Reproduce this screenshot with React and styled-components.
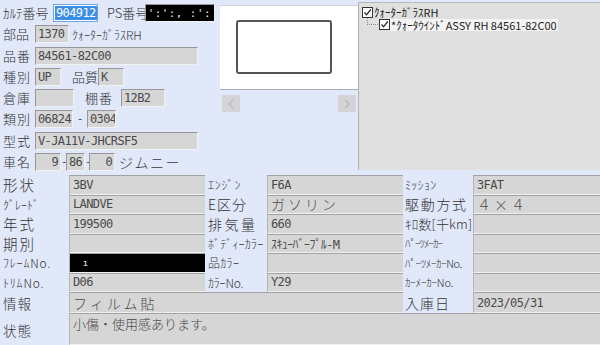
import React from "react";
import styled, { createGlobalStyle } from "styled-components";

const GlobalStyle = createGlobalStyle`
  html, body {
    margin: 0;
    padding: 0;
    background: #e0e8fa;
  }
  body {
    font-family: "Noto Sans CJK JP", sans-serif;
    font-weight: 300;
    color: #333;
  }
`;

const Screen = styled.div`
  width: 600px;
  height: 345px;
  overflow: hidden;
  display: flex;
  flex-direction: column;
`;

const Top = styled.div`
  display: flex;
  height: 175px;
  flex-shrink: 0;
`;

const Form = styled.div`
  width: 220px;
  box-sizing: border-box;
  padding: 4px 0 0 3px;
  display: flex;
  flex-direction: column;
  gap: 3.3px;
`;

const Row = styled.div`
  display: flex;
  align-items: center;
  height: 18px;
`;

const Label = styled.span`
  font-size: 13px;
  line-height: 18px;
  white-space: nowrap;
  width: ${({ w }) => (w ? `${w}px` : "auto")};
  margin-left: ${({ ml }) => ml || 0}px;
  letter-spacing: ${({ ls }) => ls || 0}px;
  flex-shrink: 0;
`;

const Dash = styled.span`
  font-family: "DejaVu Sans Mono", monospace;
  font-size: 11px;
  line-height: 18px;
  height: 18px;
  color: #444;
  width: ${({ w }) => w || 14}px;
  text-align: center;
  flex-shrink: 0;
  overflow: visible;
`;

const Field = styled.div`
  width: ${({ w }) => w}px;
  height: 18px;
  box-sizing: border-box;
  flex-shrink: 0;
  background: ${({ dark }) => (dark ? "#000" : "#d6d6d6")};
  border: 1px solid;
  border-color: #979797 #f2f2f2 #f2f2f2 #979797;
  font-family: "DejaVu Sans Mono", "Noto Sans CJK JP", monospace;
  font-weight: 400;
  font-size: 12px;
  letter-spacing: -0.6px;
  line-height: 16px;
  color: ${({ dark }) => (dark ? "#fff" : "#4a4a4a")};
  padding: 0 2px;
  text-align: ${({ right }) => (right ? "right" : "left")};
  white-space: nowrap;
  overflow: hidden;
`;

const FocusField = styled(Field)`
  background: #fff;
  border-color: #6fa3d8;
  padding: 0 1px;
`;

const Selected = styled.span`
  background: #3b8ee8;
  color: #fff;
  padding: 0 1px;
`;

const Kana = styled.span`
  font-size: ${({ size }) => size || 12}px;
  letter-spacing: ${({ ls }) => ls || 0}px;
  margin-left: ${({ ml }) => ml || 0}px;
  white-space: nowrap;
  color: ${({ light }) => (light ? "#fff" : "#3a3a3a")};
`;

const ImageCol = styled.div`
  width: 138px;
  flex-shrink: 0;
  padding-top: 5px;
  box-sizing: border-box;
`;

const ImagePanel = styled.div`
  height: 85px;
  background: #fff;
  border-top: 1px solid #cfd3dc;
  border-bottom: 1px solid #a9adb6;
  box-sizing: border-box;
  padding: 14px 0 0 16px;
`;

const Frame = styled.div`
  width: 96px;
  height: 54px;
  box-sizing: border-box;
  border: 2px solid #555;
  border-radius: 3px;
  background: #fff;
`;

const NavRow = styled.div`
  display: flex;
  justify-content: space-between;
  padding: 5px 2px 0 2px;
`;

const NavButton = styled.div`
  width: 18px;
  height: 17px;
  background: #d4d4d6;
  display: flex;
  align-items: center;
  justify-content: center;
`;

const Tree = styled.div`
  flex: 1;
  margin-top: 2px;
  height: 168px;
  background: #e0e0e0;
  border-left: 1px solid #b0b0b0;
  border-top: 1px solid #b8b8b8;
  box-sizing: border-box;
  padding: 3px 0 0 3px;
`;

const TreeItem = styled.div`
  display: flex;
  align-items: center;
  height: 12.5px;
  margin-left: ${({ indent }) => indent || 0}px;
`;

const Connector = styled.span`
  width: 11px;
  height: 7px;
  margin: -6px 1px 0 0;
  border-left: 1px dotted #8a8a8a;
  border-bottom: 1px dotted #8a8a8a;
  box-sizing: border-box;
`;

const Box = styled.span`
  width: 11px;
  height: 11px;
  box-sizing: border-box;
  border: 1px solid #333;
  background: #fff;
  display: inline-flex;
  flex-shrink: 0;
`;

const TreeText = styled.span`
  font-size: 11px;
  line-height: 12px;
  height: 12px;
  color: #222;
  font-weight: 400;
  white-space: nowrap;
  padding: 0 1px;
  background: ${({ hl }) => (hl ? "#f4f4f4" : "transparent")};
`;

const Grid = styled.div`
  flex: 1;
  display: grid;
  grid-template-columns: 69px 136px 62px 136px 70px 1fr;
  grid-template-rows: repeat(6, 19.5px) 21px 1fr;
`;

const GLabel = styled.div`
  padding-left: ${({ pl }) => (pl === undefined ? 3 : pl)}px;
  font-size: ${({ size }) => size || 14}px;
  letter-spacing: ${({ ls }) => (ls === undefined ? 2 : ls)}px;
  display: flex;
  align-items: ${({ top }) => (top ? "flex-start" : "center")};
  white-space: nowrap;
  overflow: hidden;
  color: #333;
`;

const GField = styled.div`
  grid-column: ${({ span }) => span || "auto"};
  box-sizing: border-box;
  background: ${({ dark }) => (dark ? "#000" : "#d6d6d6")};
  border-top: 1px solid #a2a2a2;
  border-left: 1px solid #b4b4b4;
  border-bottom: 1px solid #f0f0f0;
  padding: 0 3px;
  display: flex;
  align-items: ${({ top }) => (top ? "flex-start" : "center")};
  white-space: nowrap;
  overflow: hidden;
  color: ${({ dark }) => (dark ? "#fff" : "#4a4a4a")};
  font-family: ${({ jp }) =>
    jp ? `"Noto Sans CJK JP", sans-serif` : `"DejaVu Sans Mono", "Noto Sans CJK JP", monospace`};
  font-weight: ${({ jp }) => (jp ? 300 : 400)};
  font-size: ${({ jp, size }) => size || (jp ? 14 : 12)}px;
  letter-spacing: ${({ ls }) => (ls === undefined ? -0.6 : ls)}px;
`;

const Check = () => (
  <Box>
    <svg width="9" height="9" viewBox="0 0 9 9">
      <path d="M1.5 4.5 L3.5 6.8 L7.8 1.5" fill="none" stroke="#222" strokeWidth="1.2" />
    </svg>
  </Box>
);

const Arrow = ({ dir }) => (
  <svg width="8" height="10" viewBox="0 0 8 10">
    <path
      d={dir === "left" ? "M6 1 L2 5 L6 9" : "M2 1 L6 5 L2 9"}
      fill="none"
      stroke="#b9b9bd"
      strokeWidth="1.3"
    />
  </svg>
);

// label specs: [text, size, letterSpacing]
const big = (t) => [t, 14.5, 2];
const small = (t, ls = 0) => [t, 12, ls];

const gridRows = [
  [big("形状"), "3BV", small("ｴﾝｼﾞﾝ", 0.8), "F6A", small("ﾐｯｼｮﾝ", 0.3), "3FAT"],
  [small("ｸﾞﾚｰﾄﾞ"), "LANDVE", ["E区分", 14, 1], { jp: "ガソリン" }, ["駆動方式", 14, 1.7], { jp: "４×４" }],
  [big("年式"), "199500", ["排気量", 14, 2.5], "660", ["ｷﾛ数[千km]", 13, 0.2], ""],
  [big("期別"), "", small("ﾎﾞﾃﾞｨｰｶﾗｰ", 0.2), "ｽｷｭｰﾊﾞｰﾌﾟﾙ-M", ["ﾊﾟｰﾂﾒｰｶｰ", 11, -1], ""],
  [small("ﾌﾚｰﾑNo.", 0.8), { dark: "ı" }, small("品ｶﾗｰ", 0.3), "", ["ﾊﾟｰﾂﾒｰｶｰNo.", 11, -0.4], ""],
  [small("ﾄﾘﾑNo.", 0.8), "D06", small("ｶﾗｰNo.", -0.2), "Y29", ["ｶｰﾒｰｶｰNo.", 11, -0.2], ""],
];

const Value = ({ v, span }) => {
  if (v && v.jp) {
    return (
      <GField jp ls={3} span={span}>
        {v.jp}
      </GField>
    );
  }
  if (v && v.dark) {
    return (
      <GField dark span={span} size={9}>
        &nbsp;&nbsp;{v.dark}
      </GField>
    );
  }
  return <GField span={span}>{v}</GField>;
};

const Cell = ({ spec, pl }) => (
  <GLabel size={spec[1]} ls={spec[2]} pl={pl}>
    {spec[0]}
  </GLabel>
);

export default function App() {
  return (
    <>
      <GlobalStyle />
      <Screen>
        <Top>
          <Form>
            <Row>
              <Label w={50}>ｶﾙﾃ番号</Label>
              <FocusField w={45}>
                <Selected>904912</Selected>
              </FocusField>
              <Label ml={9} w={38}>PS番号</Label>
              <Field w={70} dark>
                <Kana size={10} ls={1} light>
                  ':':, :':
                </Kana>
              </Field>
            </Row>
            <Row>
              <Label w={32}>部品</Label>
              <Field w={34}>1370</Field>
              <Kana ml={3}>ｸｫｰﾀｰｶﾞﾗｽRH</Kana>
            </Row>
            <Row>
              <Label w={32} ls={1}>品番</Label>
              <Field w={163}>84561-82C00</Field>
            </Row>
            <Row>
              <Label w={32} ls={1}>種別</Label>
              <Field w={26}>UP</Field>
              <Label ml={11} w={26}>品質</Label>
              <Field w={26}>K</Field>
            </Row>
            <Row>
              <Label w={32} ls={1}>倉庫</Label>
              <Field w={39} />
              <Label ml={11} w={36} ls={1}>棚番</Label>
              <Field w={44}>12B2</Field>
            </Row>
            <Row>
              <Label w={32} ls={1}>類別</Label>
              <Field w={38}>06824</Field>
              <Dash>-</Dash>
              <Field w={29}>0304</Field>
            </Row>
            <Row>
              <Label w={32} ls={1}>型式</Label>
              <Field w={163}>V-JA11V-JHCRSF5</Field>
            </Row>
            <Row>
              <Label w={32} ls={1}>車名</Label>
              <Field w={26} right>9</Field>
              <Dash w={5}>-</Dash>
              <Field w={19} right>86</Field>
              <Dash w={4}>-</Dash>
              <Field w={26} right>0</Field>
              <Kana size={14} ls={1.5} ml={4}>ジムニー</Kana>
            </Row>
          </Form>

          <ImageCol>
            <ImagePanel>
              <Frame />
            </ImagePanel>
            <NavRow>
              <NavButton>
                <Arrow dir="left" />
              </NavButton>
              <NavButton>
                <Arrow dir="right" />
              </NavButton>
            </NavRow>
          </ImageCol>

          <Tree>
            <TreeItem>
              <Check />
              <TreeText>ｸｫｰﾀｰｶﾞﾗｽRH</TreeText>
            </TreeItem>
            <TreeItem indent={5}>
              <Connector />
              <Check />
              <TreeText hl>*ｸｫｰﾀｳｲﾝﾄﾞASSY RH 84561-82C00</TreeText>
            </TreeItem>
          </Tree>
        </Top>

        <Grid>
          {gridRows.map((r) => (
            <React.Fragment key={r[0][0]}>
              <Cell spec={r[0]} />
              <Value v={r[1]} />
              <Cell spec={r[2]} />
              <Value v={r[3]} />
              <Cell spec={r[4]} pl={2} />
              <Value v={r[5]} />
            </React.Fragment>
          ))}
          <GLabel size={13.5} ls={1}>情報</GLabel>
          <GField jp ls={3} span="2 / 5">フィルム貼</GField>
          <GLabel pl={2} size={14} ls={1}>入庫日</GLabel>
          <GField>2023/05/31</GField>
          <GLabel size={13.5} ls={1} style={{ paddingTop: 7 }} top>
            状態
          </GLabel>
          <GField jp top ls={0} size={13} span="2 / 7">
            小傷・使用感あります。
          </GField>
        </Grid>
      </Screen>
    </>
  );
}
